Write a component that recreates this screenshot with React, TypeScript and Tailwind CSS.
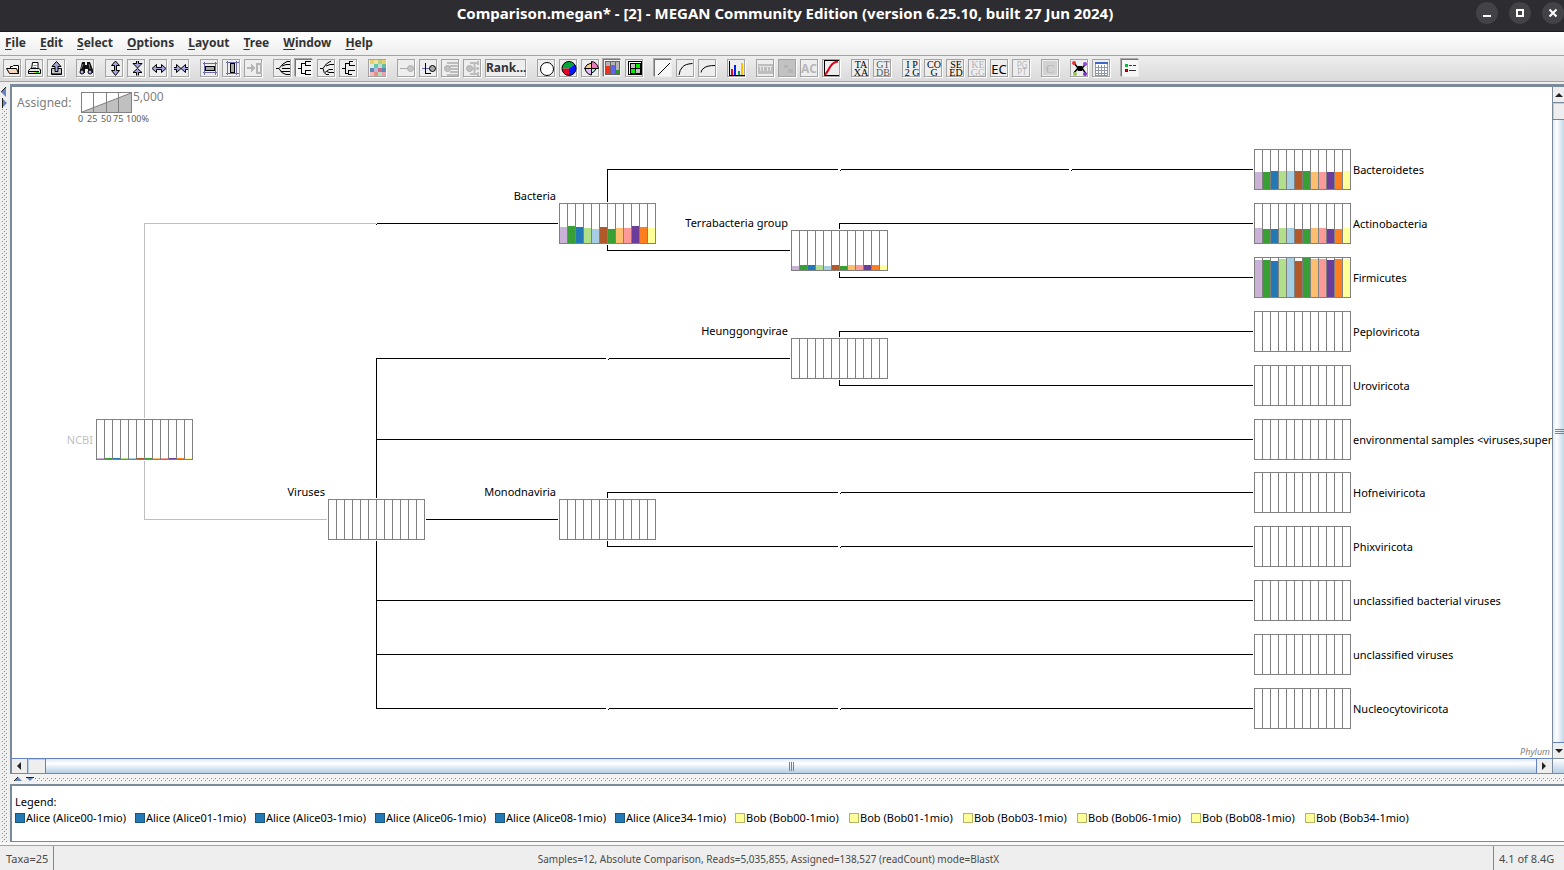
import React from "react";

interface NodeItem {
  label: string;
  x: number;
  y: number;
  side?: "left" | "top" | "right";
  color?: string;
  bars?: number[];
}

const palette = [
  "#cab2d6",
  "#379f34",
  "#2379b3",
  "#b2df8a",
  "#a6cee3",
  "#b15928",
  "#379f34",
  "#fdbf6f",
  "#fb9a99",
  "#6a3d9a",
  "#ff7f1e",
  "#ffff99",
];

const nodes: NodeItem[] = [
  { label: "NCBI", x: 96, y: 419, side: "left", color: "#bfbfbf", bars: Array(12).fill(1) },
  { label: "Bacteria", x: 559, y: 203, side: "top", bars: [16, 17, 16, 15, 14, 16, 14, 15, 15, 17, 16, 15] },
  { label: "Terrabacteria group", x: 791, y: 230, side: "top", bars: [4, 5, 5, 5, 4, 5, 4, 5, 5, 5, 5, 5] },
  { label: "Heunggongvirae", x: 791, y: 338, side: "top" },
  { label: "Viruses", x: 328, y: 499, side: "top" },
  { label: "Monodnaviria", x: 559, y: 499, side: "top" },
  { label: "Bacteroidetes", x: 1254, y: 149, bars: [17, 17, 18, 18, 18, 18, 18, 17, 17, 17, 17, 18] },
  { label: "Actinobacteria", x: 1254, y: 203, bars: [15, 14, 14, 15, 15, 14, 14, 15, 15, 14, 14, 15] },
  { label: "Firmicutes", x: 1254, y: 257, bars: [37, 37, 36, 38, 39, 36, 39, 38, 38, 37, 38, 38] },
  { label: "Peploviricota", x: 1254, y: 311 },
  { label: "Uroviricota", x: 1254, y: 365 },
  { label: "environmental samples <viruses,super", x: 1254, y: 419 },
  { label: "Hofneiviricota", x: 1254, y: 472 },
  { label: "Phixviricota", x: 1254, y: 526 },
  { label: "unclassified bacterial viruses", x: 1254, y: 580 },
  { label: "unclassified viruses", x: 1254, y: 634 },
  { label: "Nucleocytoviricota", x: 1254, y: 688 },
];

const grayEdges = "M376 223.5H144.5V418M144.5 461V519.5H327";

const edges = [
  "M377 223.5H558",
  "M607.5 202V169.5H838M841 169.5H1069M1072 169.5H1253",
  "M607.5 245V250.5H790",
  "M839.5 229V223.5H1253M839.5 272V277.5H1253",
  "M839.5 337V331.5H1253M839.5 380V385.5H1253",
  "M376.5 498V358.5H606M609 358.5H790",
  "M376 439.5H1253M376 600.5H1253M376 654.5H1253",
  "M376.5 541V708.5H606M609 708.5H838M841 708.5H1253",
  "M426 519.5H558",
  "M607.5 498V492.5H838M841 492.5H1253",
  "M607.5 541V546.5H838M841 546.5H1253",
].join("");

// small marks where an edge passes through a hidden rank
const marks = [
  [376, 224],
  [840, 170],
  [1071, 170],
  [608, 359],
  [840, 493],
  [840, 547],
  [608, 709],
  [840, 709],
];

const TreeNode = ({ label, x, y, side = "right", color = "#000", bars }: NodeItem) => {
  const textX = side === "right" ? x + 99 : x - 3;
  const textY = side === "top" ? y - 3 : y + 25;
  return (
    <g>
      <rect x={x} y={y} width={97} height={41} fill="#fff" />
      {bars?.map((h, i) => (
        <rect key={i} x={x + 1 + i * 8} y={y + 40 - h} width={7} height={h} fill={palette[i]} />
      ))}
      <rect x={x + 0.5} y={y + 0.5} width={96} height={40} fill="none" stroke="#808080" />
      {palette.slice(1).map((_, i) => (
        <path key={i} d={`M${x + 8.5 + i * 8} ${y}v40`} stroke="#808080" />
      ))}
      <text x={textX} y={textY} fill={color} textAnchor={side === "right" ? "start" : "end"}>
        {label}
      </text>
    </g>
  );
};

const TreeCanvas = () => (
  <svg
    viewBox="12 87 1700 671"
    width={1700}
    height={671}
    className="block shrink-0 font-['Noto_Sans',sans-serif] text-[11px]"
    shapeRendering="crispEdges"
  >
    <text x={17} y={107} fill="#808080" fontSize={12}>
      Assigned:
    </text>
    <path d="M82 112L131 93V112Z" fill="#c0c0c0" />
    <path d="M82 112L131 93" stroke="#808080" shapeRendering="auto" />
    <path d="M81.5 92.5h50v20h-50zM93.5 92v20M106.5 92v20M118.5 92v20" fill="none" stroke="#808080" />
    <text x={133} y={101} fill="#808080" fontSize={12}>
      5,000
    </text>
    <g fill="#606060" fontSize={9}>
      <text x={78} y={122}>0</text>
      <text x={87} y={122}>25</text>
      <text x={101} y={122}>50</text>
      <text x={113} y={122}>75</text>
      <text x={126} y={122}>100%</text>
    </g>
    <path d={grayEdges} fill="none" stroke="#bfbfbf" />
    <path d={edges} fill="none" stroke="#000" />
    {marks.map(([x, y]) => (
      <rect key={`${x}-${y}`} x={x} y={y} width={1} height={1} />
    ))}
    {nodes.map((n) => (
      <TreeNode key={n.label} {...n} />
    ))}
  </svg>
);

/* ---------- toolbar icons, all on a 16 x 16 grid ---------- */

const Icon = ({ children, smooth }: { children: React.ReactNode; smooth?: boolean }) => (
  <svg
    viewBox="-1 0 16 16"
    width={16}
    height={16}
    fill="none"
    stroke="#000"
    shapeRendering={smooth ? "auto" : "crispEdges"}
    className="block overflow-visible"
  >
    {children}
  </svg>
);

const IconText = ({ a, b, color = "#000" }: { a: string; b: string; color?: string }) => (
  <Icon smooth>
    <g
      fill={color}
      stroke="none"
      textAnchor="middle"
      fontFamily="'Liberation Serif', serif"
      fontSize={10}
    >
      <text x={8} y={8}>{a}</text>
      <text x={8} y={16}>{b}</text>
    </g>
  </Icon>
);

const lav = "#a4a4dc";

const icons: Record<string, React.ReactNode> = {
  Open: (
    <Icon smooth>
      <path d="M5.5 8V6.5h2l1-1h5v8" fill="#fff" />
      <path d="M1.5 8.5h10l2 5H4.5z" fill="#f8d8bc" />
    </Icon>
  ),
  Print: (
    <Icon smooth>
      <path d="M4.5 9.5L5.500 2.500h5.500L11 9.5" fill="#fff" />
      <path d="M6.5 5.5h3M6 7.5h3" stroke="#8a8aa8" />
      <path d="M1.5 10.5l2-2h8l2 1v4h-12z" fill="#e4e4ec" />
      <path d="M2 11.5h10" stroke="#000" />
      <path d="M7 12.5h2" stroke="#e8d800" />
      <path d="M9 12.5h3" stroke="#22cc22" />
    </Icon>
  ),
  Export: (
    <Icon smooth>
      <path d="M2.5 8.5h10v6h-10z" fill="#c8c8c8" />
      <path d="M6 11.5v-5H3L7.500 1.500 12 6.500H9v5z" fill={lav} />
      <path d="M3 13.5h9" stroke="#555" />
    </Icon>
  ),
  Find: (
    <Icon smooth>
      <path d="M4 2h3v3h2V2h3l3 8v3h-5V9H7v4H2v-3z" fill="#111" stroke="none" />
      <path d="M5 4L3 9M11 4l1 5" stroke="#777" />
      <circle cx={4} cy={12} r={2} fill="#b4b4ec" />
      <circle cx={12} cy={12} r={2} fill="#b4b4ec" />
    </Icon>
  ),
  "Expand vertically": (
    <Icon smooth>
      <path d="M8.500 1L12.500 5.500H9.500v5h3L8.500 15.500 4.500 10.500h3v-5h-3z" fill={lav} />
    </Icon>
  ),
  "Contract vertically": (
    <Icon smooth>
      <path d="M7.500 1v2.500h-3.500L8.500 8 13 3.500H9.500V1M7.500 15.500v-3h-3.500L8.500 8.500 13 12.500H9.500v3" fill={lav} />
    </Icon>
  ),
  "Expand horizontally": (
    <Icon smooth>
      <path d="M1 8.500L5.500 4.500V7.500h5v-3L15 8.500 10.500 12.500v-3h-5v3z" fill={lav} />
    </Icon>
  ),
  "Contract horizontally": (
    <Icon smooth>
      <path d="M1 7.500h2.500v-3L8 8.500 3.500 12.500v-3H1M15 7.500h-2.500v-3L8 8.500 12.500 12.500v-3H15" fill={lav} />
    </Icon>
  ),
  "Fit width": (
    <Icon>
      <path d="M2.5 2v13M13.5 2v13M1 3.5h14M1 12.5h14" stroke="#6a6aa8" />
      <path d="M3.5 6.5h9v4h-9z" fill="#aaa" />
    </Icon>
  ),
  "Fit height": (
    <Icon>
      <path d="M3.5 1v14M12.5 1v14M2 2.5h13M2 13.5h13" stroke="#6a6aa8" />
      <path d="M6.5 3.5h4v9h-4z" fill="#aaa" />
    </Icon>
  ),
  "Zoom to selection": (
    <Icon>
      <path d="M1 8h5" stroke="#b4b4b4" strokeWidth={2} />
      <path d="M5 4l4 4-4 4z" fill="#b4b4b4" stroke="none" />
      <path d="M11 4h4v9h-4z" stroke="#b4b4b4" strokeWidth={2} />
    </Icon>
  ),
  "Rounded cladogram": (
    <Icon smooth>
      <path d="M1 8.5h3M15 1.5h-3Q8 3 4 8.5M15 4.5h-4L7 6M4 8.500Q6 13.500 11 14.500h4M6 11.500h9M7 8.500h8" />
    </Icon>
  ),
  "Rectangular phylogram": (
    <Icon>
      <path d="M1 8.5h3M4.5 3v11M4 3.5h4M8.5 1v5M8 1.5h6M8 5.5h6M4 13.5h4M8.5 10v5M8 10.5h6M8 14.5h6" />
    </Icon>
  ),
  "Rounded phylogram": (
    <Icon smooth>
      <path d="M1 8.5h3M12 1.5h-1Q7 3 4 8.5M15 4.5h-4L7 6M4 8.5Q5 13.5 7 14.5h3M6 12.500L10 9.500h4M8 11.500l2 1h5" />
    </Icon>
  ),
  "Rectangular cladogram": (
    <Icon>
      <path d="M1 8.5h3M4.5 3v11M4 3.5h4M8.5 1v5M8 1.5h4M8 5.5h6M4 13.5h3M7.5 10v5M7 10.5h7M7 14.5h4" />
    </Icon>
  ),
  Colors: (
    <Icon>
      {[
        "#e8cf70", "#f4e2a0", "#b8d078", "#e8cf70",
        "#dfe8e8", "#5ec8a8", "#b8e0d8", "#68bca0",
        "#5c88b8", "#b4b8e4", "#d06888", "#5c88b8",
        "#f0b8c0", "#e89080", "#b8d8c0", "#e8a0b0",
      ].map((c, i) => (
        <rect key={i} x={(i % 4) * 4} y={Math.floor(i / 4) * 4} width={4} height={4} fill={c} stroke="none" />
      ))}
    </Icon>
  ),
  Collapse: (
    <Icon smooth>
      <path d="M1 8.5h8" stroke="#a8a8a8" />
      <circle cx={11.5} cy={8.5} r={3} fill="#c4c4c4" stroke="#b0b0b0" />
    </Icon>
  ),
  Uncollapse: (
    <Icon smooth>
      <path d="M1 8.5h8" stroke="#6a6ab0" />
      <path d="M4.5 3v11M4 13.5h6" />
      <circle cx={11.5} cy={8.5} r={3} fill="#aaa" />
    </Icon>
  ),
  "Collapse subtree": (
    <Icon smooth>
      <circle cx={4.5} cy={8.5} r={3} fill="#c0c0c0" stroke="#acacac" />
      <path d="M4 3h11M7 6h8M8 9h7M7 12h8M4 15h11" stroke="#bcbcbc" strokeWidth={2} />
    </Icon>
  ),
  "Uncollapse subtree": (
    <Icon smooth>
      <circle cx={4.5} cy={8.5} r={3} fill="#c0c0c0" stroke="#acacac" />
      <path d="M5 3h9M8 8.5h6M5 14h9M13 1v4M13 7v3M13 12v4M9.500 3v11" stroke="#bcbcbc" strokeWidth={2} />
    </Icon>
  ),
  Circles: (
    <Icon smooth>
      <circle cx={8} cy={9} r={6.5} fill="#fff" />
    </Icon>
  ),
  "Pie charts": (
    <Icon smooth>
      <path d="M8 8.5H1A7 7 0 0 1 13.500 4z" fill="#00a838" stroke="none" />
      <path d="M8 8.5L13.500 4A7 7 0 0 1 8 15.500z" fill="#0018ff" stroke="none" />
      <path d="M8 8.5V15.500A7 7 0 0 1 1 8.5z" fill="#e80028" stroke="none" />
      <circle cx={8} cy={8.5} r={7} />
    </Icon>
  ),
  "Coxcomb charts": (
    <Icon smooth>
      <path d="M8.5 8.5V1.5Q14 2 15.500 8.5z" fill="#f078c0" />
      <path d="M8.5 8.5H1.5Q3 4 8.5 3z" fill="#ffcf88" />
      <path d="M8.5 8.5H2Q3 14 8.5 15z" fill="#e8b8f8" />
      <path d="M8.5 8.5H13Q12 12 8.5 13z" fill="#a8f0e0" />
    </Icon>
  ),
  "Bar charts": (
    <Icon>
      <path d="M0 1h15v14H0z" fill="#b4b4b4" stroke="none" />
      <path d="M0 6h5v9H0z" fill="#f03020" stroke="none" />
      <path d="M5 5h5v10H5z" fill="#6464f0" stroke="none" />
      <path d="M10 10h5v5h-5z" fill="#309030" stroke="none" />
      <path d="M0.5 1.5h14v13h-14zM5.5 1v14M10.5 1v14" stroke="#666" />
    </Icon>
  ),
  "Heat maps": (
    <Icon>
      <path d="M1.5 1.5h13v13h-13z" fill="#fff" />
      <path d="M4 4h5v5H4zM9 9h4v4H9z" fill="#c0c0c0" stroke="none" />
      <path d="M9 4h4v4H9zM4 9h4v4H4z" fill="#00f000" stroke="none" />
      <path d="M3.5 3.5h10v10h-10zM8.5 3v10M3 8.5h10" />
    </Icon>
  ),
  "Linear scale": (
    <Icon smooth>
      <path d="M2 15L14 3" />
    </Icon>
  ),
  "Sqrt scale": (
    <Icon smooth>
      <path d="M1 15Q1.5 10 4.5 7Q7 4 14.5 3.5" />
    </Icon>
  ),
  "Log scale": (
    <Icon smooth>
      <path d="M1 12.5Q1 10 4 8Q7 5.500 15 5.5" />
    </Icon>
  ),
  "Show chart": (
    <Icon>
      <path d="M0.5 1v14.500H16" />
      <g stroke="none">
        <path d="M2 9h2v6H2z" fill="#f00020" />
        <path d="M5 5h2v10H5z" fill="#0020f0" />
        <path d="M9 11h2v4h-2z" fill="#00a050" />
        <path d="M12 3h2v12h-2z" fill="#ffc000" />
      </g>
    </Icon>
  ),
  "Word cloud": (
    <Icon>
      <path d="M0 4h15v10H0z" fill="#bebebe" stroke="none" />
      <path d="M1 6.5h13M2.5 7v4M5.5 6v5M9.5 7v4M12.5 6v5" stroke="#e4e4e4" />
    </Icon>
  ),
  "Co-occurrence": (
    <Icon>
      <path d="M-1 0h16v16H-1z" fill="#c2c2c2" stroke="none" />
      <path d="M4 5h4v3H4zM8 9h5v4H8z" fill="#b4b4b4" stroke="none" />
    </Icon>
  ),
  "Attribute correlation": (
    <Icon smooth>
      <text
        x={7}
        y={13}
        textAnchor="middle"
        fontFamily="'Noto Sans', sans-serif"
        fontSize={12}
        fontWeight={700}
        fill="#b8b8b8"
        stroke="none"
      >
        AC
      </text>
    </Icon>
  ),
  "Rarefaction curve": (
    <Icon smooth>
      <path d="M0.5 0v15.500H15M0 0.5h15" />
      <path d="M1 15Q4 11 6 7Q9 2 14 1.5" stroke="#e00018" strokeWidth={2} />
    </Icon>
  ),
  Taxonomy: <IconText a="TA" b="XA" />,
  GTDB: <IconText a="GT" b="DB" color="#555" />,
  InterPro: <IconText a="I P" b="2 G" />,
  COG: <IconText a="CO" b="G" />,
  SEED: <IconText a="SE" b="ED" />,
  KEGG: <IconText a="KE" b="GG" color="#b4b4b4" />,
  EC: (
    <Icon smooth>
      <text
        x={7}
        y={14}
        textAnchor="middle"
        fontFamily="'Noto Sans', sans-serif"
        fontSize={13}
        fill="#000"
        stroke="none"
      >
        EC
      </text>
    </Icon>
  ),
  PGPT: (
    <Icon smooth>
      <g fill="#b4b4b4" stroke="none" textAnchor="middle" fontFamily="'Noto Sans', sans-serif" fontSize={8}>
        <text x={8} y={8}>PG</text>
        <text x={8} y={15}>PT</text>
      </g>
    </Icon>
  ),
  Classification: (
    <Icon smooth>
      <path d="M0 1h14v14H0z" fill="#d2d2d2" stroke="none" />
      <text
        x={7}
        y={13}
        textAnchor="middle"
        fontFamily="'Liberation Serif', serif"
        fontSize={13}
        fill="#b4b4b4"
        stroke="none"
      >
        C
      </text>
    </Icon>
  ),
  "Cluster analysis": (
    <Icon smooth>
      <path d="M2 3l4 5h4l4-4M6 8l-4 5M10 8l4 6" strokeWidth={1.500} />
      <path d="M6 6h4l1 3-1 2H6L5 9z" fill="#000" stroke="none" />
      <g stroke="none">
        <circle cx={2} cy={3} r={2} fill="#e83030" />
        <circle cx={13} cy={4} r={2} fill="#9048d0" />
        <circle cx={3} cy={14} r={2} fill="#98c850" />
        <circle cx={13} cy={14} r={2} fill="#8030c0" />
      </g>
    </Icon>
  ),
  Table: (
    <Icon>
      <path d="M1 2h13v13H1z" fill="#fff" stroke="none" />
      <path d="M1.5 4v11.500h12V4M4.500 5v10M7.500 5v10M10.500 5v10M1 7.500h13M1 10.500h13M1 13.500h13" stroke="#9098a8" />
      <path d="M1 3h13" stroke="#3f68c8" strokeWidth={2} />
    </Icon>
  ),
  "Show legend": (
    <Icon>
      <path d="M2 4h3v3H2z" fill="#00c040" stroke="none" />
      <path d="M2.5 9.5h2v2h-2z" fill="#d02020" stroke="#601010" />
      <path d="M6 5.5h3M10 5.5h3M6 10.5h7" stroke="#333" />
    </Icon>
  ),
};

const toolbar: string[][] = [
  ["Open", "Print", "Export"],
  ["Find"],
  ["Expand vertically", "Contract vertically", "Expand horizontally", "Contract horizontally"],
  ["Fit width", "Fit height", "Zoom to selection"],
  ["Rounded cladogram", "Rectangular phylogram", "Rounded phylogram", "Rectangular cladogram"],
  ["Colors"],
  ["Collapse", "Uncollapse", "Collapse subtree", "Uncollapse subtree", "Rank..."],
  ["Circles", "Pie charts", "Coxcomb charts", "Bar charts", "Heat maps"],
  ["Linear scale", "Sqrt scale", "Log scale"],
  ["Show chart"],
  ["Word cloud", "Co-occurrence", "Attribute correlation", "Rarefaction curve"],
  ["Taxonomy", "GTDB"],
  ["InterPro", "COG", "SEED", "KEGG", "EC", "PGPT"],
  ["Classification"],
  ["Cluster analysis", "Table"],
  ["Show legend"],
];

const pressed = ["Rectangular phylogram", "Bar charts", "Linear scale", "Show legend"];

const ToolButton = ({ name }: { name: string }) => {
  if (name === "Rank...") {
    return (
      <button className="h-[18px] w-[41px] border border-[#a3a3a3] bg-[#eee] text-[12px] leading-4 font-bold text-[#333] shadow-[1px_1px_0_#fff]">
        Rank...
      </button>
    );
  }
  return (
    <button
      aria-label={name}
      className={
        pressed.includes(name)
          ? "size-[18px] border border-t-[#777] border-l-[#777] border-r-[#eee] border-b-[#eee] bg-[#f6f6f6] shadow-[-1px_-1px_0_#aaa]"
          : "size-[18px] border border-[#a3a3a3] bg-[#eee] shadow-[1px_1px_0_#fff]"
      }
    >
      {icons[name]}
    </button>
  );
};

const menus = ["File", "Edit", "Select", "Options", "Layout", "Tree", "Window", "Help"];

const samples = ["00", "01", "03", "06", "08", "34"];

const Dots = ({ id }: { id: string }) => (
  <svg width="100%" height="100%" className="block" shapeRendering="crispEdges">
    <pattern id={id} width={4} height={4} patternUnits="userSpaceOnUse">
      <rect x={1} y={1} width={1} height={1} fill="#7a8a99" />
      <rect x={3} y={3} width={1} height={1} fill="#7a8a99" />
      <rect x={2} y={2} width={1} height={1} fill="#fff" />
      <rect x={0} y={0} width={1} height={1} fill="#fff" />
    </pattern>
    <rect width="100%" height="100%" fill={`url(#${id})`} />
  </svg>
);

const Arrow = ({ d }: { d: string }) => (
  <svg viewBox="0 0 10 10" width={10} height={10} fill="#222" className="block shrink-0">
    <path d={d} />
  </svg>
);

const TitleBar = () => (
  <header className="grid h-8 shrink-0 grid-cols-[1fr_auto_1fr] items-center border-b border-[#1c1b1f] bg-[#2d2c31] pb-[6px] pl-[6px]">
    <span />
    <h1 className="text-[15px] leading-5 font-bold whitespace-nowrap text-white">
      Comparison.megan* - [2] - MEGAN Community Edition (version 6.25.10, built 27 Jun 2024)
    </h1>
    <div className="flex justify-end gap-[11px]">
      <button aria-label="Minimize" className="size-[22px] rounded-full bg-[#434247]">
        <svg viewBox="0 0 22 22" className="block size-full">
          <path d="M7 14h8" stroke="#fff" strokeWidth={2} />
        </svg>
      </button>
      <button aria-label="Maximize" className="size-[22px] rounded-full bg-[#434247]">
        <svg viewBox="0 0 22 22" className="block size-full">
          <rect x={8} y={8} width={6} height={6} fill="none" stroke="#fff" strokeWidth={2} />
        </svg>
      </button>
      <button aria-label="Close" className="size-[22px] rounded-full bg-[#434247]">
        <svg viewBox="0 0 22 22" className="block size-full">
          <path d="M7.5 7.5l7 7M14.5 7.5l-7 7" stroke="#fff" strokeWidth={2} />
        </svg>
      </button>
    </div>
  </header>
);

const HScrollBar = () => (
  <div className="flex h-4 shrink-0 border-t border-b border-t-[#6382bf] border-b-[#7a8a99] bg-[#eee]">
    <button aria-label="Scroll left" className="flex w-4 items-center border-r border-[#7a8a99] pl-px">
      <Arrow d="M8 1v8L4 5z" />
    </button>
    <div className="w-[17px] border-t border-l border-[#b8cfe5]" />
    <div className="flex flex-1 items-center justify-center gap-px border-r border-l border-[#6382bf] bg-linear-to-b from-[#dde8f3] via-white via-30% to-[#b8cfe5]">
      <i className="h-[9px] w-px bg-[#6382bf]" />
      <i className="h-[9px] w-px bg-[#6382bf]" />
      <i className="h-[9px] w-px bg-[#6382bf]" />
    </div>
    <button aria-label="Scroll right" className="flex w-[15px] items-center pl-px">
      <Arrow d="M4 1v8l4-4z" />
    </button>
  </div>
);

const VScrollBar = () => (
  <div className="flex w-3 shrink-0 flex-col overflow-hidden border-l border-[#7a8a99] bg-[#eee]">
    <button aria-label="Scroll up" className="flex h-4 w-[11px] shrink-0 items-center border-b border-[#7a8a99] pl-px">
      <Arrow d="M1 7h8L5 3z" />
    </button>
    <div className="h-4 shrink-0 border-t border-l border-[#b8cfe5]" />
    <div className="flex flex-1 flex-col items-end justify-center gap-px border-t border-b border-[#6382bf] bg-linear-to-r from-[#dde8f3] via-white via-30% to-[#c4d8ea]">
      <i className="h-px w-[9px] bg-[#6382bf]" />
      <i className="h-px w-[9px] bg-[#6382bf]" />
      <i className="h-px w-[9px] bg-[#6382bf]" />
    </div>
    <button aria-label="Scroll down" className="flex h-[15px] w-[11px] shrink-0 items-center pl-px">
      <Arrow d="M1 3h8L5 7z" />
    </button>
    <div className="h-4 shrink-0 border-t border-b border-[#7a8a99] bg-linear-to-b from-white to-[#b8cfe5]" />
  </div>
);

const App = () => {
  return (
    <div className="flex h-screen flex-col overflow-hidden bg-[#eee] font-['Noto_Sans',sans-serif] text-[11px] text-black">
      <TitleBar />
      <nav className="flex h-6 shrink-0 items-center gap-[14px] border-b border-[#a3a3a3] bg-linear-to-b from-white to-[#eee] pb-[2px] pl-[5px] text-[12px] leading-4 font-bold text-[#333]">
        {menus.map((m) => (
          <button key={m}>
            <span className="underline underline-offset-2">{m[0]}</span>
            {m.slice(1)}
          </button>
        ))}
      </nav>
      <div className="flex h-[26px] shrink-0 gap-[11px] border-b border-[#a3a3a3] bg-linear-to-b from-[#eee] to-[#dadada] pt-[3px] pl-[3px]">
        {toolbar.map((group) => (
          <div key={group[0]} className="flex gap-1">
            {group.map((name) => (
              <ToolButton key={name} name={name} />
            ))}
          </div>
        ))}
      </div>

      <div className="mt-[2px] flex min-h-0 flex-1">
        <div className="relative w-[10px] shrink-0 pt-6 pr-[2px] pl-px">
          <Dots id="dots-v" />
          <svg viewBox="0 0 8 26" width={8} height={26} className="absolute top-0 left-0">
            <path d="M6 3v10L1 8z" fill="#6382bf" />
            <path d="M6 3L1 8" stroke="#222" />
            <path d="M2 14v10l5-5z" fill="#6382bf" />
            <path d="M2.500 14v10" stroke="#222" />
          </svg>
        </div>
        <div className="flex min-w-0 flex-1 flex-col">
          <main className="flex min-h-0 flex-1 border-t-3 border-l-2 border-[#7a8a99] bg-white">
            <div className="flex min-w-0 flex-1 flex-col">
              <div className="relative min-h-0 flex-1 overflow-hidden">
                <TreeCanvas />
                <span className="absolute right-[2px] bottom-0 text-[9px] leading-3 text-[#808080] italic">Phylum</span>
              </div>
              <HScrollBar />
            </div>
            <VScrollBar />
          </main>
          <div className="relative h-[10px] shrink-0 bg-[#f2f2f2] pt-[3px] pb-[2px] pl-6">
            <Dots id="dots-h" />
            <svg viewBox="0 0 26 6" width={26} height={6} className="absolute top-[2px] left-1">
              <path d="M0 5h8L4 1z" fill="#6382bf" />
              <path d="M0 5L4 1" stroke="#222" />
              <path d="M12 1h8l-4 4z" fill="#6382bf" />
              <path d="M12 1.500h8" stroke="#222" />
            </svg>
          </div>
          <section className="h-[58px] shrink-0 overflow-hidden border-t-2 border-b border-l-2 border-[#7a8a99] bg-white pt-2 pl-[3px]">
            <p className="leading-4">Legend:</p>
            <ul className="flex leading-4 whitespace-nowrap">
              {samples.map((s) => (
                <li key={s} className="flex w-[120px] shrink-0 items-center gap-px">
                  <i className="size-[10px] shrink-0 border border-[#195580] bg-[#2379b3]" />
                  {`Alice (Alice${s}-1mio)`}
                </li>
              ))}
              {samples.map((s) => (
                <li key={s} className="flex w-[114px] shrink-0 items-center gap-px">
                  <i className="size-[10px] shrink-0 border border-[#b3b36b] bg-[#ffff99]" />
                  {`Bob (Bob${s}-1mio)`}
                </li>
              ))}
            </ul>
          </section>
        </div>
      </div>

      <div className="h-[3px] shrink-0 bg-[#f8f8f8]" />
      <footer className="flex h-[25px] shrink-0 items-stretch border-t border-[#a3a3a3] leading-[26px] text-[#4a4a4a]">
        <span className="w-[54px] border-r border-[#7a8a99] pl-[6px]">Taxa=25</span>
        <span className="flex-1 pr-[10px] text-center text-[10px]">
          Samples=12, Absolute Comparison, Reads=5,035,855, Assigned=138,527 (readCount) mode=BlastX
        </span>
        <span className="w-[71px] border-l border-[#7a8a99] pl-[5px]">4.1 of 8.4G</span>
      </footer>
    </div>
  );
};

export default App;
